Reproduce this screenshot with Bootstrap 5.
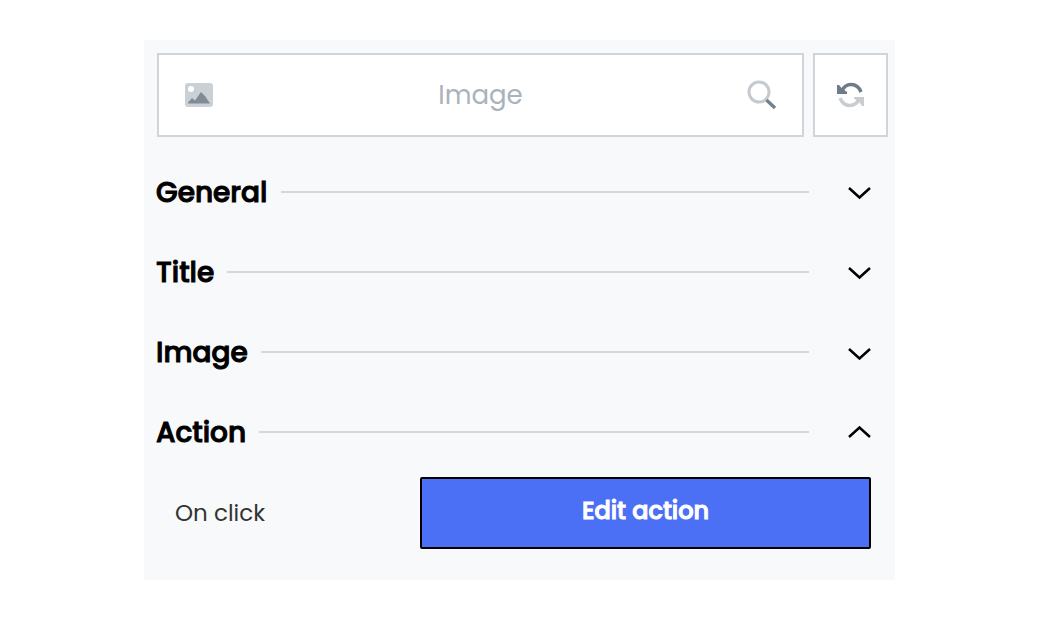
<!DOCTYPE html>
<html lang="en">
<head>
<meta charset="utf-8">
<meta name="viewport" content="width=device-width, initial-scale=1">
<title>Image properties</title>
<link href="https://cdn.jsdelivr.net/npm/bootstrap@5.3.0/dist/css/bootstrap.min.css" rel="stylesheet">
<style>
  body { font-family: Poppins, Inter, sans-serif; background: #fff; color: #000; }
  .page { padding: 40px 145px 40px 144px; }
  .panel { background: #f8f9fb; padding: 13px 7px 31px 12px; }
  .toolbar { gap: 9px; padding-left: 1px; }
  .box { background: #fff; border: 2px solid #d0d5dc; height: 84px; }
  .picker { padding: 0 25px; }
  .picker input { font-size: 26px; line-height: 40px; color: #a9b3bd; }
  .picker input::placeholder { color: #a9b3bd; opacity: 1; }
  .reload { width: 75px; }
  .sections { padding: 15px 17px 0 0; }
  .section-toggle { height: 80px; background: none; color: #000; font-size: 28px; font-weight: 500; line-height: 40px; -webkit-text-stroke: 1px #000; }
  .section-name { padding-top: 2px; }
  .section-toggle svg { margin-top: 2px; }
  .rule { height: 2px; background: #d3d7de; margin: 0 39px 0 13px; }
  .setting { padding: 5px 0 0 19px; font-size: 23px; }
  .setting label { color: #333; }
  .edit { width: 451px; height: 72px; background: #4b6ff5; border: 2px solid #000; border-radius: 2px; color: #fff; font-size: 24px; font-weight: 500; -webkit-text-stroke: 1px #fff; }
</style>
</head>
<body>
<main class="page">
  <div class="panel">
    <div class="toolbar d-flex">
      <div class="box picker d-flex align-items-center flex-fill">
        <svg width="30" height="26" viewBox="0 0 30 26" class="flex-shrink-0" aria-hidden="true">
          <rect x="1" y="1" width="28" height="24" rx="3" fill="#cbd0d5"/>
          <circle cx="7" cy="7" r="3" fill="#fff"/>
          <path d="M4 21.500v-1l4-4.500 3 2.500 6-8.500 4 4 5 7.500z" fill="#808b95"/>
        </svg>
        <input type="text" class="border-0 bg-transparent text-center flex-fill p-0" placeholder="Image" aria-label="Element" size="1">
        <svg width="30" height="30" viewBox="0 0 30 30" class="flex-shrink-0" fill="none" aria-hidden="true">
          <circle cx="12" cy="12" r="10" stroke="#c5cacf" stroke-width="3"/>
          <path d="M19.500 20L28 28" stroke="#75818c" stroke-width="3.500"/>
        </svg>
      </div>
      <button type="button" class="box reload p-0 d-flex align-items-center justify-content-center" aria-label="Refresh">
        <svg width="28" height="28" viewBox="0 0 28 28" fill="none" aria-hidden="true">
          <path d="M5 10C8.500 1.500 20 1 24 11" stroke="#6f7b86" stroke-width="3.500"/>
          <path d="M0 4h2l2.500 3 5.500 4v2H0z" fill="#6f7b86"/>
          <path d="M22 18C18.500 26.500 7 27 3 17" stroke="#c8cdd2" stroke-width="3.500"/>
          <path d="M27 25h-2l-2.500-3.500-5.500-4V16h10z" fill="#c8cdd2"/>
        </svg>
      </button>
    </div>
    <div class="sections">
      <button type="button" class="section-toggle border-0 p-0 w-100 d-flex align-items-center" aria-expanded="false">
        <span class="section-name">General</span><span class="rule flex-fill"></span>
        <svg width="23" height="14" viewBox="0 0 23 14" fill="none" stroke="#000" stroke-width="2.500" aria-hidden="true"><path d="M1 2l10.500 9.500L22 2"/></svg>
      </button>
      <button type="button" class="section-toggle border-0 p-0 w-100 d-flex align-items-center" aria-expanded="false">
        <span class="section-name">Title</span><span class="rule flex-fill"></span>
        <svg width="23" height="14" viewBox="0 0 23 14" fill="none" stroke="#000" stroke-width="2.500" aria-hidden="true"><path d="M1 2l10.500 9.500L22 2"/></svg>
      </button>
      <button type="button" class="section-toggle border-0 p-0 w-100 d-flex align-items-center" aria-expanded="false">
        <span class="section-name">Image</span><span class="rule flex-fill"></span>
        <svg width="23" height="14" viewBox="0 0 23 14" fill="none" stroke="#000" stroke-width="2.500" aria-hidden="true"><path d="M1 3l10.500 9.500L22 3"/></svg>
      </button>
      <button type="button" class="section-toggle border-0 p-0 w-100 d-flex align-items-center" aria-expanded="true" aria-controls="action-body">
        <span class="section-name">Action</span><span class="rule flex-fill"></span>
        <svg width="23" height="14" viewBox="0 0 23 14" fill="none" stroke="#000" stroke-width="2.500" aria-hidden="true"><path d="M1 11L11.500 1.500 22 11"/></svg>
      </button>
      <div id="action-body" class="setting d-flex align-items-center justify-content-between">
        <label for="edit-action">On click</label>
        <button type="button" id="edit-action" class="edit px-0 pt-0 pb-1">Edit action</button>
      </div>
    </div>
  </div>
</main>
<script src="https://cdn.jsdelivr.net/npm/bootstrap@5.3.0/dist/js/bootstrap.bundle.min.js"></script>
</body>
</html>
